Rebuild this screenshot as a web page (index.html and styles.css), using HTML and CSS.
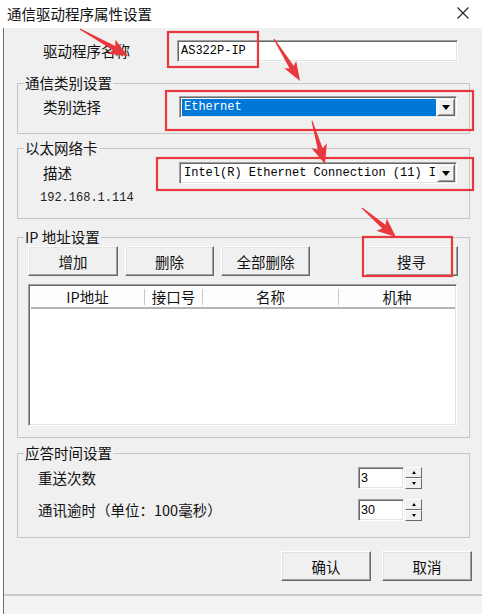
FILE: index.html
```html
<!DOCTYPE html>
<html lang="zh-CN">
<head>
  <meta charset="UTF-8">
  <title>通信驱动程序属性设置</title>
  <link rel="stylesheet" href="styles.css">
</head>
<body>
  <div class="window">
    <div class="titlebar">
      <span class="title">通信驱动程序属性设置</span>
      <svg class="close" width="12" height="12" viewBox="0 0 12 12">
        <path d="M0.5 0.5 L11.5 11.5 M11.5 0.5 L0.5 11.5" stroke="#222" stroke-width="1.1" fill="none"/>
      </svg>
    </div>

    <div class="client">
      <div class="name-row">
        <span class="lbl">驱动程序名称</span>
        <div class="edit name-edit">AS322P-IP</div>
      </div>

      <fieldset class="group g-type">
        <legend>通信类别设置</legend>
        <div class="row">
          <span class="lbl">类别选择</span>
          <div class="combo">
            <div class="combo-text"><span class="selected">Ethernet</span></div>
            <div class="drop"><span class="tri"></span></div>
          </div>
        </div>
      </fieldset>

      <fieldset class="group g-nic">
        <legend>以太网络卡</legend>
        <div class="row">
          <span class="lbl">描述</span>
          <div class="combo">
            <div class="combo-text">Intel(R) Ethernet Connection (11) I</div>
            <div class="drop"><span class="tri"></span></div>
          </div>
        </div>
        <div class="ip-text">192.168.1.114</div>
      </fieldset>

      <fieldset class="group g-ip">
        <legend>IP 地址设置</legend>
        <div class="btn-bar">
          <button class="btn w90">增加</button>
          <button class="btn w89">删除</button>
          <button class="btn w89">全部删除</button>
          <button class="btn search">搜寻</button>
        </div>
        <div class="listview">
          <div class="lv-head">
            <span class="col c-ip">IP地址</span>
            <span class="col c-port">接口号</span>
            <span class="col c-name">名称</span>
            <span class="col c-type">机种</span>
          </div>
          <div class="lv-body"></div>
        </div>
      </fieldset>

      <fieldset class="group g-time">
        <legend>应答时间设置</legend>
        <div class="spin-row">
          <span class="lbl">重送次数</span>
          <div class="spin">
            <div class="edit spin-edit">3</div>
            <div class="spin-btns">
              <div class="sb"><span class="up"></span></div>
              <div class="sb"><span class="down"></span></div>
            </div>
          </div>
        </div>
        <div class="spin-row">
          <span class="lbl">通讯逾时（单位：100毫秒）</span>
          <div class="spin">
            <div class="edit spin-edit">30</div>
            <div class="spin-btns">
              <div class="sb"><span class="up"></span></div>
              <div class="sb"><span class="down"></span></div>
            </div>
          </div>
        </div>
      </fieldset>

      <div class="dlg-buttons">
        <button class="btn w90">确认</button>
        <button class="btn w90">取消</button>
      </div>

      <div class="status"></div>
    </div>

    <!-- annotation layer: red boxes and arrows drawn over the dialog -->
    <svg class="annot" width="482" height="614" viewBox="0 0 482 614">
      <g fill="none" stroke="#e8383d" stroke-width="2.2">
        <rect x="168" y="32" width="90" height="35"/>
        <rect x="166" y="91" width="307" height="39"/>
        <rect x="157" y="158" width="316" height="32"/>
        <rect x="363" y="237" width="89" height="39"/>
      </g>
      <g fill="#e8383d">
        <polygon points="79.75,29.44 112.82,50.34 107.52,53.65 128,56 115.36,39.71 115.28,45.98 80.25,28.56"/>
        <polygon points="273.57,39.26 289.58,68.60 284.18,68.36 300,81 296.16,61.12 293.86,66.02 274.43,38.74"/>
        <polygon points="311.52,121.15 317.77,149.51 311.62,148.32 325,164 326.86,143.46 322.53,147.99 312.48,120.85"/>
        <polygon points="361.68,208.38 382.21,228.52 376.35,230.76 396,237 386.73,218.58 385.45,224.72 362.32,207.62"/>
      </g>
    </svg>
  </div>
</body>
</html>
```

FILE: styles.css
```css
body {
  margin: 0;
  background: #fff;
  font-family: "Noto Sans CJK SC", "Liberation Sans", sans-serif;
  font-size: 14.5px;
  color: #111;
}
.window {
  position: relative;
  width: 482px;
  height: 614px;
  overflow: hidden;
  background: #fff;
}
.titlebar {
  height: 28px;
  display: flex;
  align-items: center;
  justify-content: space-between;
  padding: 0 13px 0 7px;
  box-sizing: border-box;
}
.title {
  line-height: 20px;
  margin-top: -1px;
}
.close {
  margin-top: -2px;
}
.client {
  height: 586px;
  margin-left: 3px;
  border-left: 1px solid #6e6e6e;
  background: #f0f0f0;
  padding: 0 12px 0 13px;
  display: flex;
  flex-direction: column;
}
.lbl {
  white-space: nowrap;
  line-height: 20px;
}

/* sunken edit box */
.edit {
  box-sizing: border-box;
  background: #fff;
  border: 1px solid;
  border-color: #a0a0a0 #fff #fff #a0a0a0;
  box-shadow: inset 1px 1px 0 #696969, inset -1px -1px 0 #e3e3e3;
  font-family: "Liberation Mono", monospace;
  font-size: 12px;
  line-height: 20px;
  padding-left: 3px;
  color: #000;
}
.name-row {
  margin-top: 12px;
  height: 22px;
  display: flex;
  align-items: center;
  justify-content: space-between;
  padding: 0 12px 0 26px;
}
.name-edit {
  width: 281px;
  height: 22px;
}

/* group boxes */
.group {
  margin: 0;
  padding: 0;
  width: 453px;
  box-sizing: border-box;
  border: 1px solid #c6c6c6;
  min-width: 0;
}
.group legend {
  margin-left: 6px;
  padding: 0 1px;
  line-height: 18px;
}
.g-type {
  margin-top: 12px;
  padding: 4px 0 15px;
}
.g-nic {
  margin-top: 5px;
  padding: 5px 0 12px;
}
.g-ip {
  margin-top: 9px;
  padding: 0 0 11px;
}
.g-time {
  margin-top: 6px;
  padding: 5px 0 16px;
}
.row {
  height: 22px;
  display: flex;
  align-items: center;
  justify-content: space-between;
  padding: 0 12px 0 25px;
}

/* combo box */
.combo {
  width: 278px;
  height: 22px;
  box-sizing: border-box;
  display: flex;
  background: #fff;
  border: 1px solid;
  border-color: #a0a0a0 #fff #fff #a0a0a0;
  box-shadow: inset 1px 1px 0 #696969, inset -1px -1px 0 #e3e3e3;
  padding: 2px 1px 1px 2px;
}
.combo-text {
  flex: 1;
  overflow: hidden;
  white-space: nowrap;
  font-family: "Liberation Mono", monospace;
  font-size: 12px;
  line-height: 17px;
  color: #000;
  padding-left: 2px;
}
.combo-text:has(.selected) {
  padding-left: 0;
  margin-right: 1px;
  background: #0078d7;
}
.selected {
  color: #fff;
  padding-left: 2px;
}
.drop {
  width: 18px;
  margin-top: -1px;
  box-sizing: border-box;
  background: #f0f0f0;
  border: 1px solid;
  border-color: #f0f0f0 #696969 #696969 #f0f0f0;
  box-shadow: inset 1px 1px 0 #fff, inset -1px -1px 0 #a0a0a0;
  display: flex;
  align-items: center;
  justify-content: center;
}
.tri {
  width: 0;
  height: 0;
  border-left: 4px solid transparent;
  border-right: 4px solid transparent;
  border-top: 5px solid #000;
}
.ip-text {
  margin-top: 6px;
  padding-left: 22px;
  font-family: "Liberation Mono", monospace;
  font-size: 12px;
  line-height: 16px;
  color: #222;
}

/* raised buttons */
.btn {
  height: 30px;
  box-sizing: border-box;
  background: #f0f0f0;
  border: 1px solid;
  border-color: #fff #696969 #696969 #fff;
  box-shadow: inset -1px -1px 0 #a0a0a0, inset 1px 1px 0 #e3e3e3;
  font-family: "Noto Sans CJK SC", sans-serif;
  font-size: 14.5px;
  color: #111;
  padding: 0;
}
.w90 {
  width: 90px;
}
.w89 {
  width: 89px;
}
.btn-bar {
  display: flex;
  gap: 7px;
  padding: 0 11px 0 10px;
}
.btn-bar .search {
  margin-left: auto;
  width: 93px;
}

/* list view */
.listview {
  margin: 8px 12px 0 10px;
  height: 142px;
  box-sizing: border-box;
  background: #fff;
  border: 1px solid;
  border-color: #a0a0a0 #fff #fff #a0a0a0;
  box-shadow: inset 1px 1px 0 #696969, inset -1px -1px 0 #e3e3e3;
  padding: 2px 1px 1px 2px;
}
.lv-head {
  height: 20px;
  display: flex;
  align-items: center;
  border-bottom: 2px solid #b4b4b4;
  background: #fdfdfd;
}
.col {
  text-align: center;
  line-height: 16px;
  border-right: 1px solid #c8c8c8;
  box-sizing: border-box;
}
.c-ip {
  width: 114px;
}
.c-port {
  width: 58px;
}
.c-name {
  width: 136px;
}
.c-type {
  flex: 1;
  border-right: none;
}

/* spinners */
.spin-row {
  height: 22px;
  display: flex;
  align-items: center;
  justify-content: space-between;
  padding: 0 47px 0 20px;
}
.spin-row + .spin-row {
  margin-top: 10px;
}
.spin {
  display: flex;
  gap: 1px;
  height: 22px;
}
.spin-edit {
  width: 46px;
  height: 22px;
  font-family: "Liberation Sans", sans-serif;
  font-size: 12.5px;
  padding-left: 2px;
}
.spin-btns {
  width: 17px;
  display: flex;
  flex-direction: column;
}
.sb {
  flex: 1;
  box-sizing: border-box;
  background: #f0f0f0;
  border: 1px solid;
  border-color: #fff #696969 #696969 #fff;
  display: flex;
  align-items: center;
  justify-content: center;
}
.up {
  width: 0;
  height: 0;
  border-left: 2px solid transparent;
  border-right: 2px solid transparent;
  border-bottom: 3px solid #000;
}
.down {
  width: 0;
  height: 0;
  border-left: 2px solid transparent;
  border-right: 2px solid transparent;
  border-top: 3px solid #000;
}

.dlg-buttons {
  margin-top: 13px;
  margin-right: -2px;
  display: flex;
  justify-content: flex-end;
  gap: 11px;
}
.status {
  margin-top: auto;
  height: 18px;
  margin-left: -13px;
  margin-right: -12px;
  border-top: 2px solid #c9c9c9;
  background: #f3f3f3;
}

.annot {
  position: absolute;
  left: 0;
  top: 0;
  pointer-events: none;
}
```
